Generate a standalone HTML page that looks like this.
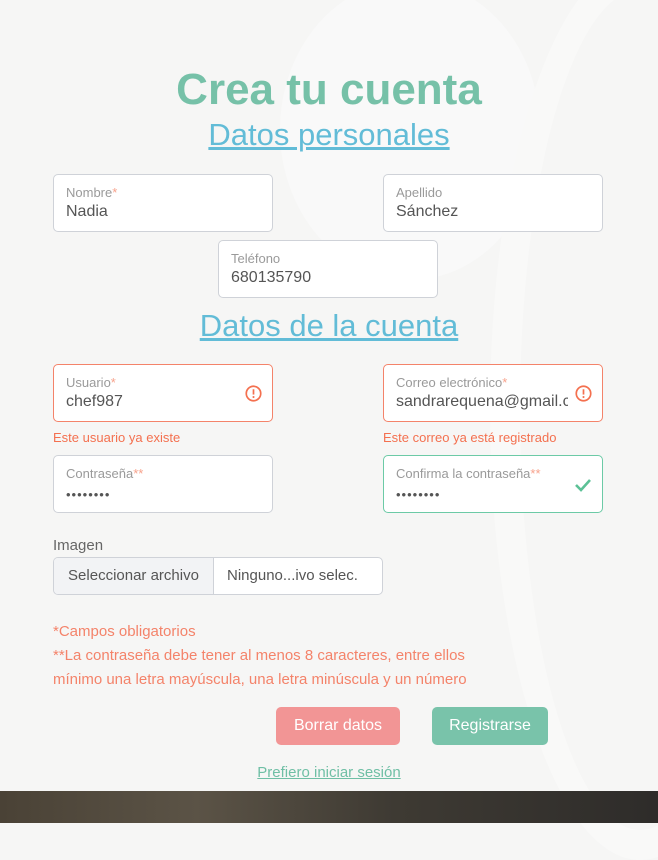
<!DOCTYPE html>
<html><head><meta charset="utf-8"><style>
*{margin:0;padding:0;box-sizing:border-box}
body{width:658px;height:823px;position:relative;overflow:hidden;background:#f6f6f5;font-family:"Liberation Sans",sans-serif}
.a{position:absolute}
.c{left:0;width:658px;text-align:center}
.box{position:absolute;width:220px;height:58px;background:#fff;border:1px solid #cfd2d8;border-radius:5px}
.box .l{position:absolute;left:12px;top:10px;font-size:13px;color:#9a9a9a}
.box .v{position:absolute;left:12px;top:28px;font-size:16px;color:#555;white-space:nowrap;overflow:hidden;width:190px}
.st{color:#f7a28c}
.err{border-color:#f4836a}
.ok{border-color:#6ccaa6}
.em{font-size:13px;color:#f4704f}
.ic{position:absolute;right:10px;top:20px}
.dots{letter-spacing:1px;font-size:13px!important;top:31px!important}
.n{font-size:15px;color:#f4836a}
.btn{position:absolute;height:38px;border-radius:5px;color:#fff;font-size:16px;text-align:center;line-height:38px}
</style></head><body>
<div class="a" style="left:280px;top:-20px;width:260px;height:300px;border-radius:50%;background:#f9f9f9"></div>
<div class="a" style="left:490px;top:-40px;width:300px;height:900px;border-radius:50%;border:30px solid #f9f9f8"></div>
<div class="a c" style="top:65px;font-size:44px;font-weight:bold;color:#76c1a8">Crea tu cuenta</div>
<div class="a c" style="top:117px;font-size:31px;color:#62bcd7;text-decoration:underline">Datos personales</div>
<div class="box" style="left:53px;top:174px"><div class="l">Nombre<span class="st">*</span></div><div class="v">Nadia</div></div>
<div class="box" style="left:383px;top:174px"><div class="l">Apellido</div><div class="v">Sánchez</div></div>
<div class="box" style="left:218px;top:240px"><div class="l">Teléfono</div><div class="v">680135790</div></div>
<div class="a c" style="top:308px;font-size:31px;color:#62bcd7;text-decoration:underline">Datos de la cuenta</div>
<div class="box err" style="left:53px;top:364px"><div class="l">Usuario<span class="st">*</span></div><div class="v">chef987</div>
<svg class="ic" width="17" height="17" viewBox="0 0 16 16"><circle cx="8" cy="8" r="6.8" fill="none" stroke="#f4704f" stroke-width="1.6"/><rect x="7.2" y="4" width="1.6" height="5" fill="#f4704f"/><circle cx="8" cy="11.3" r="1" fill="#f4704f"/></svg></div>
<div class="box err" style="left:383px;top:364px"><div class="l">Correo electrónico<span class="st">*</span></div><div class="v" style="width:172px">sandrarequena@gmail.com</div>
<svg class="ic" width="17" height="17" viewBox="0 0 16 16"><circle cx="8" cy="8" r="6.8" fill="none" stroke="#f4704f" stroke-width="1.6"/><rect x="7.2" y="4" width="1.6" height="5" fill="#f4704f"/><circle cx="8" cy="11.3" r="1" fill="#f4704f"/></svg></div>
<div class="a em" style="left:53px;top:430px">Este usuario ya existe</div>
<div class="a em" style="left:383px;top:430px">Este correo ya está registrado</div>
<div class="box" style="left:53px;top:455px"><div class="l">Contraseña<span class="st">**</span></div><div class="v dots">••••••••</div></div>
<div class="box ok" style="left:383px;top:455px"><div class="l">Confirma la contraseña<span class="st">**</span></div><div class="v dots">••••••••</div>
<svg class="ic" style="top:22px" width="18" height="14" viewBox="0 0 18 14"><path d="M2 7l5 5L16 2" fill="none" stroke="#5cc196" stroke-width="2.6"/></svg></div>
<div class="a" style="left:53px;top:537px;font-size:15px;color:#666">Imagen</div>
<div class="a" style="left:53px;top:557px;width:330px;height:38px;border:1px solid #cfd2d8;border-radius:5px;background:#fff;overflow:hidden">
<div class="a" style="left:0;top:0;width:160px;height:36px;background:#f2f3f5;border-right:1px solid #cfd2d8;font-size:15px;color:#555;line-height:36px;text-align:center">Seleccionar archivo</div>
<div class="a" style="left:173px;top:0;font-size:15px;color:#555;line-height:36px">Ninguno...ivo selec.</div></div>
<div class="a n" style="left:53px;top:623px">*Campos obligatorios</div>
<div class="a n" style="left:53px;top:647px">**La contraseña debe tener al menos 8 caracteres, entre ellos</div>
<div class="a n" style="left:53px;top:671px">mínimo una letra mayúscula, una letra minúscula y un número</div>
<div class="btn" style="left:276px;top:707px;width:124px;background:#f29595">Borrar datos</div>
<div class="btn" style="left:432px;top:707px;width:116px;background:#79c3aa">Registrarse</div>
<div class="a c" style="top:764px;font-size:15px;color:#6fbfa5;text-decoration:underline">Prefiero iniciar sesión</div>
<div class="a" style="left:0;top:791px;width:658px;height:32px;background:linear-gradient(90deg,#4a4236,#5b5346 30%,#3e3a33 60%,#2e2c2a)"></div>
</body></html>
